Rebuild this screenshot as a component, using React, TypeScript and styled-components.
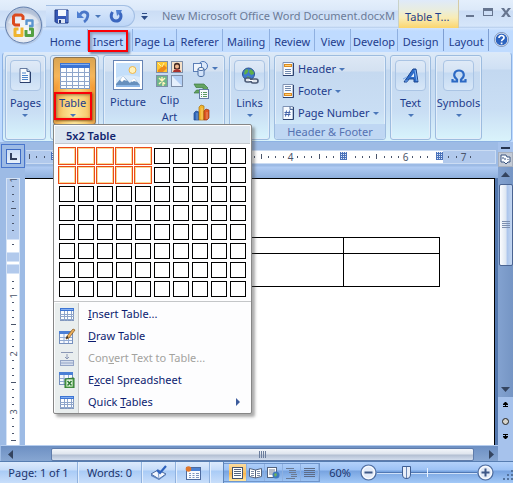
import React from "react";
import styled, { createGlobalStyle, css } from "styled-components";

const Global = createGlobalStyle`
  * { box-sizing: border-box; }
  html, body { margin: 0; }
  body { font-family: "Noto Sans", "Open Sans", sans-serif; font-size: 11px; line-height: 14px; color: #1e3c8c; }
  button { font: inherit; color: inherit; background: none; border: 0; padding: 0; margin: 0; text-align: center; }
  svg { display: block; flex: none; }
`;

/* ---------- window frame ---------- */

const Window = styled.div`
  display: flex;
  flex-direction: column;
  height: 100vh;
  min-height: 440px;
  overflow: hidden;
  background: #bfdbff;
`;

const TopArea = styled.header`
  position: relative;
  flex: none;
`;

const TitleBar = styled.div`
  display: flex;
  align-items: center;
  height: 28px;
  padding-left: 46px;
  background: linear-gradient(#e4effc 0, #dce9f9 10px, #cbddf5 11px, #d6e6fa 26px, #b5cdec 28px);
`;

const QuickAccess = styled.div`
  display: flex;
  align-items: center;
  flex: none;
  width: 89px;
  height: 22px;
  margin-top: 4px;
  padding-left: 8px;
  border: 1px solid #a3bfe4;
  border-left: 0;
  border-radius: 0 11px 11px 0;
  background: linear-gradient(#dbe9fb, #bcd5f7);
`;

const QuickButton = styled.button<{ $gap: number }>`
  display: flex;
  margin-right: ${(p) => p.$gap}px;
`;

const Customize = styled.button`
  flex: none;
  width: 27px;
  display: flex;
  justify-content: center;
  padding: 4px 8px 0 0;
`;

const Title = styled.h1`
  flex: 1 1 0;
  min-width: 0;
  margin: 3px 0 0;
  white-space: nowrap;
  font-size: 11px;
  line-height: 16px;
  font-weight: 400;
  color: #6b7b98;
`;

const ContextTab = styled.div`
  flex: none;
  width: 61px;
  height: 28px;
  padding: 9px 0 0 6px;
  line-height: 16px;
  white-space: nowrap;
  border-left: 1px solid #c9d2c8;
  border-right: 1px solid #d5cba4;
  background: linear-gradient(#dfeafa 0, #e9eddf 10px, #f9ecb4 18px, #fbd56d 28px);
`;

const WindowButtons = styled.div`
  display: flex;
  flex: none;
  align-items: center;
  justify-content: space-between;
  width: 54px;
  padding: 0 2px 4px 7px;
`;

const OfficeButton = styled.button`
  position: absolute;
  left: 4px;
  top: 6px;
`;

const TabRow = styled.nav`
  display: flex;
  height: 24px;
  padding: 1px 1px 0 44px;
  background: linear-gradient(#d3e5fd 0, #bfdbff 3px);
`;

const Tab = styled.button<{ $grow: number; $last?: boolean; $marked?: boolean }>`
  position: relative;
  flex: ${(p) => p.$grow} 1 0;
  min-width: 0;
  height: 22px;
  padding: 4px ${(p) => (p.$marked ? 4 : 0)}px 0 0;
  line-height: 18px;
  white-space: nowrap;
  border-right: 1px solid ${(p) => (p.$last ? "#7f9fd2" : "#8fb0e0")};
`;

const TabMark = styled.span`
  position: absolute;
  inset: 1px 4px -1px 0;
  border: 2px solid #fb0007;
  box-shadow: 2px 2px 2px #7688a8, inset 2px 2px 3px #8f9dbb;
`;

const HelpButton = styled.button`
  flex: none;
  width: 23px;
  display: flex;
  justify-content: center;
  padding: 3px 0 0 2px;
`;

/* ---------- ribbon ---------- */

const Ribbon = styled.section`
  display: flex;
  gap: 4px;
  flex: none;
  height: 90px;
  margin: 0 1px 0 2px;
  padding: 2px 0 2px 2px;
  border: 1px solid #8db2e3;
  border-top-color: #dbe9fb;
  border-radius: 4px;
  background: linear-gradient(#dce9f7 0, #cfe0f4 16px, #c3d8f0 17px, #c9def4 56px, #daf3fb 88px);
`;

const Group = styled.div<{ $width: number }>`
  position: relative;
  display: flex;
  flex-direction: column;
  align-items: center;
  flex: 0 1 ${(p) => p.$width}px;
  height: 85px;
  border: 1px solid #9dbcdf;
  border-radius: 3px;
  box-shadow: inset 0 0 0 1px #e3eefa;
  background: linear-gradient(#dde8f5 0, #d4e1f1 15px, #c5d9f0 16px, #c9def4 56px, #d8f4fc 84px);
`;

const BigButton = styled.button<{ $spaced?: boolean }>`
  display: flex;
  flex-direction: column;
  align-items: center;
  padding-top: ${(p) => (p.$spaced ? 4 : 5)}px;
  line-height: 13px;
  white-space: nowrap;
`;

const IconFrame = styled.span`
  display: flex;
  align-items: center;
  justify-content: center;
  width: 31px;
  height: 31px;
  margin-bottom: 5px;
  border: 1px solid #aac4e4;
  border-radius: 4px;
  background: linear-gradient(#dfeaf7 0, #d5e3f4 11px, #c3d9f2 12px, #d9e8f8 30px);
`;

const Caret = styled.span`
  width: 0;
  height: 0;
  border: 3px solid transparent;
  border-top-color: #4a77b9;
  border-bottom: 0;
`;

const CaretBelow = styled(Caret)`
  margin-top: 5px;
`;

const TableButton = styled.button`
  display: flex;
  flex-direction: column;
  align-items: center;
  width: 43px;
  height: 68px;
  margin-top: 1px;
  padding-top: 5px;
  line-height: 13px;
  border: 1px solid #8c7350;
  border-radius: 3px;
  background: radial-gradient(ellipse at 50% 90%, #ffeaa0 0, #f8cf75 40%, rgba(248, 190, 90, 0) 70%),
    linear-gradient(#d9a452 0, #f6b65a 18px, #f59c36 30px, #e8a24a 100%);
`;

const TableLabel = styled.span`
  display: flex;
  flex-direction: column;
  align-items: center;
  width: 38px;
  height: 28px;
  margin: 3px 4px 0 0;
  padding-top: 2px;
  border: 2px solid #fb0007;
  box-shadow: 1px 1px 2px #8a5a20, inset 1px 1px 3px #9c7640;
`;

const Illustrations = styled.div`
  display: flex;
  justify-content: space-between;
  align-self: stretch;
  padding: 0 6px;
`;

const SmallStack = styled.div`
  display: flex;
  flex-direction: column;
  gap: 5px;
  padding-top: 4px;
`;

const SmallButton = styled.button`
  display: flex;
  align-items: center;
  gap: 3px;
  height: 17px;
`;

const HeaderList = styled.div`
  flex: 1;
  align-self: stretch;
  padding: 2px 0 0 7px;
`;

const HeaderItem = styled.button`
  display: flex;
  align-items: center;
  height: 22px;
  white-space: nowrap;
`;

const HeaderItemText = styled.span`
  margin: 0 3px 0 4px;
`;

const GroupCaption = styled.div`
  align-self: stretch;
  height: 16px;
  line-height: 15px;
  text-align: center;
  color: #5572b2;
  background: #bfd7f3;
  border-radius: 0 0 3px 3px;
`;

/* ---------- table menu ---------- */

const Menu = styled.div`
  position: absolute;
  z-index: 5;
  left: 2px;
  top: 68px;
  width: 199px;
  border: 1px solid #868686;
  border-radius: 0 2px 2px 2px;
  background: #fdfdfe;
  box-shadow: 3px 3px 3px rgba(70, 70, 70, 0.45);
  color: #0c1c70;
`;

const MenuHeading = styled.h2`
  margin: 1px 1px 0;
  height: 18px;
  padding-left: 11px;
  font-size: 11px;
  line-height: 19px;
  font-weight: 600;
  color: #10246e;
  background: #dde6ef;
  border-bottom: 1px solid #c4c9ce;
`;

const Picker = styled.div`
  display: grid;
  grid-template-columns: repeat(10, 16px);
  grid-auto-rows: 16px;
  gap: 3px;
  padding: 4px 5px;
  border-bottom: 1px solid #c4c6c8;
`;

const Cell = styled.button<{ $on: boolean }>`
  border: 1px solid #000;
  background: #fff;
  ${(p) =>
    p.$on &&
    css`
      border-color: #f8dc98;
      box-shadow: 0 0 0 1px #ec4a18;
    `}
`;

const MenuList = styled.ul`
  list-style: none;
  margin: 1px 0 0;
  padding: 0 1px;
  background: linear-gradient(90deg, transparent 0 1px, #e9eeee 1px 24px, #c5c7c8 24px 25px, transparent 25px);
`;

const MenuItem = styled.button<{ $muted?: boolean }>`
  display: grid;
  grid-template-columns: 24px 1fr 24px;
  align-items: center;
  column-gap: 9px;
  width: 100%;
  height: 22px;
  text-align: left;
  white-space: nowrap;
  color: ${(p) => (p.$muted ? "#a3a39f" : "inherit")};
  svg { justify-self: center; }
`;

/* ---------- document area ---------- */

const Workspace = styled.main`
  display: grid;
  grid-template-columns: 25px 1fr 15px;
  grid-template-rows: 36px 1fr 16px;
  flex: 1;
  min-height: 0;
  background: #9dbbe5;
`;

const Corner = styled.div`
  display: flex;
  align-items: center;
  justify-content: center;
  height: 24px;
  margin: 2px 0 0 1px;
  border: 1px solid #4976cc;
`;

const TabSelector = styled.button`
  display: flex;
  align-items: center;
  justify-content: center;
  width: 15px;
  height: 15px;
  border: 1px solid #3f6cc4;
  background: linear-gradient(#c8dcf4, #e8f0fa);
`;

const RulerArea = styled.div`
  overflow: hidden;
  background: linear-gradient(#9dbbe5 24px, #b0cbf3 25px, #8fb0dc 36px);
`;

const VRulerArea = styled.div`
  overflow: hidden;
  padding-left: 6px;
`;

const PageArea = styled.div`
  min-width: 0;
  padding-right: 3px;
  background: #5377ad;
`;

const Page = styled.div`
  height: 100%;
  padding: 58px 54px 0 29px;
  border: 1px solid #000;
  border-width: 1px 1px 0 0;
  background: #fff;
`;

const DocTable = styled.table`
  width: 100%;
  border-collapse: collapse;
  table-layout: fixed;
  td { border: 1px solid #000; padding: 0; height: 33px; }
  tr:first-child td { height: 16px; }
`;

const VScroll = styled.div`
  grid-column: 3;
  grid-row: 1 / 4;
  display: flex;
  flex-direction: column;
  align-items: center;
  background: #a6c2ec;
`;

const SplitHandle = styled.div`
  flex: none;
  width: 9px;
  height: 2px;
  margin: 5px 0 3px;
  background: #26354f;
`;

const RulerToggle = styled.button`
  flex: none;
  display: flex;
  align-items: center;
  justify-content: center;
  width: 15px;
  height: 15px;
  background: #c3cad5;
  border: 1px solid #a8b0be;
`;

const VTrack = styled.div`
  display: flex;
  flex-direction: column;
  align-items: center;
  flex: 1;
  width: 15px;
  padding: 5px 0 5px;
  background: linear-gradient(90deg, #83a2d0, #7595c4);
`;

const VThumb = styled.div`
  display: flex;
  align-items: center;
  justify-content: center;
  flex: 0 1 82px;
  width: 14px;
  margin: 7px 0 auto;
  border: 1px solid #4a6492;
  border-radius: 2px;
  background: linear-gradient(90deg, #fafcfe, #dde6f2 50%, #abc5ec 60%, #c5d8f2);
`;

const BrowseButtons = styled.div`
  display: flex;
  flex-direction: column;
  align-items: center;
  justify-content: space-between;
  flex: none;
  height: 64px;
  padding: 5px 0 21px;
`;

const HScroll = styled.div`
  grid-column: 1 / 3;
  display: flex;
  align-items: center;
  padding: 1px 4px 0 7px;
  border-left: 1px solid #9dbbe5;
  border-top: 1px solid #b6cdee;
  background: linear-gradient(#6d90c3, #87a6d2);
`;

const HThumb = styled.div`
  display: flex;
  align-items: center;
  justify-content: center;
  flex: 1;
  height: 13px;
  margin: 0 15px 0 38px;
  border: 1px solid #5f7cab;
  border-radius: 2px;
  background: linear-gradient(#f3f6fa, #dfe5ee 45%, #b3bfd2 55%, #d3deee);
`;

/* ---------- status bar ---------- */

const StatusBar = styled.footer`
  display: flex;
  flex: none;
  height: 22px;
  border-top: 1px solid #567db1;
  background: linear-gradient(#dceafd 0, #c6dcf9 8px, #a9cbf6 9px, #c8defa 21px);
  color: #1c356e;
`;

const StatusCell = styled.div<{ $width: number }>`
  display: flex;
  align-items: center;
  justify-content: center;
  flex: none;
  width: ${(p) => p.$width}px;
  white-space: nowrap;
  border-right: 1px solid #8fb1de;
  box-shadow: 1px 0 0 #e2eefd;
`;

const ViewArea = styled.div`
  display: flex;
  align-items: center;
  flex: 1;
  min-width: 0;
  margin-left: 13px;
  border-left: 1px solid #5f86bb;
  background: linear-gradient(#b3d1fa 0, #9cc2f5 8px, #77a3e0 9px, #a3c9f7 21px);
`;

const ViewButtons = styled.div`
  display: flex;
  flex: none;
  height: 19px;
  padding-left: 5px;
  border: 1px solid #6f95cb;
  border-left: 0;
`;

const ViewButton = styled.button<{ $active?: boolean }>`
  display: flex;
  align-items: center;
  justify-content: center;
  width: 18px;
  border-right: 1px solid #8eb0e0;
  background: ${(p) => (p.$active ? "linear-gradient(#fbdca0, #f9c161 50%, #fdb145 51%, #ffe7a0)" : "none")};
`;

const ZoomLabel = styled.label`
  width: 40px;
  flex: none;
  text-align: center;
`;

const ZoomButton = styled.button`
  display: flex;
  flex: none;
`;

const ZoomSlider = styled.input`
  flex: 1;
  min-width: 0;
  height: 16px;
  margin: 0;
  appearance: none;
  background: linear-gradient(#eaf3ff, #eaf3ff) 50% 50% / 1px 9px no-repeat,
    linear-gradient(transparent 7px, #5078b4 7px 8px, #cfe1f9 8px 9px, transparent 9px);
  &::-webkit-slider-thumb {
    appearance: none;
    width: 9px;
    height: 13px;
    border: 1px solid #3f5e92;
    border-radius: 1px 1px 5px 5px;
    background: linear-gradient(90deg, transparent 3px, #6b87b5 3px 4px, transparent 4px), #e8eef8;
  }
`;

const Grip = styled.div`
  display: flex;
  align-items: flex-end;
  justify-content: flex-end;
  flex: none;
  width: 19px;
  height: 100%;
  padding: 0 0 3px;
`;

/* ---------- icons ---------- */

const OfficeLogo = () => (
  <svg width="40" height="40" viewBox="0 0 40 40">
    <defs>
      <radialGradient id="orb" cx="50%" cy="70%" r="60%">
        <stop offset="0" stopColor="#fff" />
        <stop offset=".6" stopColor="#dfe4ee" />
        <stop offset="1" stopColor="#b3c1d8" />
      </radialGradient>
    </defs>
    <circle cx="20" cy="20" r="19" fill="#b6cbe9" />
    <circle cx="19.500" cy="19" r="18" fill="url(#orb)" stroke="#6481af" />
    <path d="M4 17C7 4 32 4 35 17C27 20 12 20 4 17Z" fill="#fff" opacity=".4" />
    <g fill="none" strokeWidth="3" strokeLinejoin="round">
      <path d="M16 19H11l-1.500-1.500v-7L11 9h6.500L19 10.500V14" stroke="#dc4a1e" />
      <path d="M22.500 19v-4.500h6V20h-3.500" stroke="#5a94cf" strokeWidth="2.400" />
      <path d="M18 21.500v8h-7v-6.500h3.500" stroke="#efb42e" />
      <path d="M22 24v5.500h6.500V23H25" stroke="#54a043" />
    </g>
  </svg>
);

const SaveIcon = () => (
  <svg width="15" height="15" viewBox="0 0 15 15">
    <path d="M1 1h13v13H2.500L1 12.500z" fill="#3557b5" stroke="#223b82" />
    <path d="M4 1h8v6H4z" fill="#f5f8fd" />
    <path d="M12 2h1v11" fill="none" stroke="#6b8ddb" />
    <path d="M4 10h7v4H4z" fill="#dde5f2" />
    <path d="M5 11h2v3H5z" fill="#22397a" />
  </svg>
);

const UndoIcon = () => (
  <svg width="14" height="14" viewBox="0 0 14 14">
    <path d="M4 5.500C7 1 13 3 11.500 8Q11 11 8 13" fill="none" stroke="#4a76c8" strokeWidth="2.800" />
    <path d="M1 2v7h7z" fill="#4f7fd1" />
  </svg>
);

const RedoIcon = () => (
  <svg width="14" height="14" viewBox="0 0 14 14">
    <path d="M3.500 3C1 7 2.500 12 7 12s6.500-5 3.500-8.500" fill="none" stroke="#3a66bf" strokeWidth="3" />
    <path d="M7 1h6l-1 2-4 4z" fill="#4f7fd1" />
  </svg>
);

const HelpIcon = () => (
  <svg width="15" height="15" viewBox="0 0 15 15">
    <circle cx="7.500" cy="7.500" r="6.500" fill="#2c63bf" stroke="#f2f6fc" strokeWidth="1.200" />
    <circle cx="7.500" cy="7.500" r="7" fill="none" stroke="#536b97" strokeWidth=".7" />
    <path d="M5 6c0-3.500 5.200-3 5-.3C9.900 7.500 7.600 7.400 7.600 9.300M7.600 10.500v1.700" fill="none" stroke="#fff" strokeWidth="1.700" />
  </svg>
);

const PagesIcon = () => (
  <svg width="12" height="15" viewBox="0 0 12 15">
    <path d="M1 .5h7l3 3v11H1z" fill="#f6fafe" stroke="#667ba1" />
    <path d="M11.500 4v10.500H1" fill="none" stroke="#2a3f6c" />
    <path d="M8 .5v3h3" fill="#b9cce8" stroke="#4a648f" />
    <path d="M3 5h4M3 7.500h6M3 9.500h6M3 11.500h6" stroke="#4a82c8" />
  </svg>
);

const TableIcon = ({ w = 30, h = 26, cols = 5, rows = 5 }: { w?: number; h?: number; cols?: number; rows?: number }) => {
  const top = Math.round(h / 5);
  return (
    <svg width={w} height={h} viewBox={`0 0 ${w} ${h}`}>
      <rect x=".5" y=".5" width={w - 1} height={h - 1} fill="#fdfeff" stroke="#8197bd" />
      {Array.from({ length: cols - 1 }, (_, i) => (
        <path key={i} d={`M${Math.round(((i + 1) * w) / cols) + 0.5} ${top}V${h}`} stroke="#8fa6cb" />
      ))}
      {Array.from({ length: rows - 1 }, (_, i) => (
        <path key={i} d={`M0 ${Math.round(top + ((i + 1) * (h - top)) / rows) + 0.5}H${w}`} stroke="#8fa6cb" />
      ))}
      <rect width={w} height={top} fill="#3c74d3" />
      <path d={`M1 1.500H${w - 1}`} stroke="#82aef2" />
    </svg>
  );
};

const PictureIcon = () => (
  <svg width="30" height="30" viewBox="0 0 30 30">
    <rect x=".5" y=".5" width="29" height="29" fill="#fff" stroke="#6684b5" />
    <rect x="3" y="3" width="24" height="24" fill="#c4dffa" />
    <path d="M3 18c6-4 16-3 24-1v10H3z" fill="#dcecfb" />
    <circle cx="19.500" cy="10" r="3.500" fill="#fff2bd" stroke="#f0b649" />
    <path d="M3 24l7-8 4 4 3 3 4-5 6 7v2H3z" fill="#6790bd" />
    <path d="M10 16l4 5-3-1-2 2-2-2zM21 18l3 4-3-1-2 1-1-1z" fill="#fff" />
    <path d="M3 25h24v2H3z" fill="#8cb6e6" />
  </svg>
);

const ClipArtIcon = () => (
  <svg width="27" height="27" viewBox="0 0 27 27">
    <g stroke="#7e8ea8">
      <rect x=".5" y=".5" width="11" height="11" fill="#ffc832" />
      <rect x="15.500" y=".5" width="11" height="11" fill="#f4e0c8" />
      <rect x=".5" y="14.500" width="11" height="11" fill="#6fb58b" />
      <rect x="15.500" y="14.500" width="11" height="11" fill="#b3cff5" />
    </g>
    <path d="M2 9l6-5 3 3-4 4H2z" fill="#ee8a1c" />
    <path d="M2 2l3 3M8 2l-2 4" stroke="#fff0a0" />
    <path d="M18 4c0-3 6-3 6 0v4h-6z" fill="#442a24" />
    <circle cx="21" cy="5.500" r="2" fill="#f1b78e" />
    <path d="M17 11c0-4 8-4 8 0z" fill="#a9312c" />
    <path d="M3 17l6 6M9 17l-6 6M6 16v3M7 22v3" stroke="#fff4b8" strokeWidth="1.400" />
    <path d="M16 15l10 10H16z" fill="#e6f0fd" />
  </svg>
);

const ShapesIcon = () => (
  <svg width="16" height="16" viewBox="0 0 16 16">
    <circle cx="10" cy="5" r="4.500" fill="#dbe8fa" stroke="#4b74b6" />
    <rect x=".5" y="2.500" width="8" height="8" fill="#eef4fc" stroke="#5c7fb7" />
    <path d="M5 8v6c0 2 6 2 6 0V8" fill="#d4e4fa" stroke="#44699f" />
    <ellipse cx="8" cy="8" rx="3" ry="1.500" fill="#fff" stroke="#44699f" />
  </svg>
);

const SmartArtIcon = () => (
  <svg width="17" height="16" viewBox="0 0 17 16">
    <path d="M1 1h10l4 4-2 2H7v3H1l2.500-3H10V4.500H3z" fill="#63a360" stroke="#3c7a41" strokeWidth=".7" />
    <rect x="6.500" y="6.500" width="9" height="9" fill="#f6f9fd" stroke="#627ba4" />
    <path d="M8 9.500h1M10 9.500h4M8 11.500h1M10 11.500h4M8 13.500h1M10 13.500h4" stroke="#5a9a62" />
  </svg>
);

const ChartIcon = () => (
  <svg width="17" height="17" viewBox="0 0 17 17">
    <path d="M1 9l2-2 3 1v8H1z" fill="#2f68ba" stroke="#1e4689" strokeWidth=".7" />
    <path d="M6 3l2-2 3 1v14H6z" fill="#f2b52c" stroke="#a8710e" strokeWidth=".7" />
    <path d="M11 7l2-2 3 1v8l-2 2h-3z" fill="#df5722" stroke="#9a3511" strokeWidth=".7" />
    <path d="M4 9v7M9 4v12M14 8v7" stroke="#fff" strokeOpacity=".35" />
  </svg>
);

const LinksIcon = () => (
  <svg width="18" height="18" viewBox="0 0 18 18">
    <circle cx="7.500" cy="7" r="6" fill="#3f78ce" stroke="#27508f" />
    <path d="M4 3c3-2 4 0 3 2S4 8 3 7zM9 2c3 1 4 3 4 5l-3 1-2-3zM6 9l3 1-2 3z" fill="#5fae49" />
    <g fill="none" stroke="#4c5b76" strokeWidth="1.600">
      <rect x="4" y="11" width="6" height="4" rx="2" fill="#dfe5ee" />
      <rect x="10" y="12" width="7" height="4" rx="2" fill="#dfe5ee" />
    </g>
    <path d="M8 13.500h4" stroke="#fff" />
  </svg>
);

const HeaderDocIcon = ({ kind }: { kind: "top" | "bottom" | "number" }) => (
  <svg width="12" height="14" viewBox="0 0 12 14">
    <path d="M1 .5h10v13H1z" fill="#f8fbff" stroke="#7f92b3" />
    <path d="M11.500 1v12.500H1" fill="none" stroke="#2c4270" />
    {kind === "number" ? (
      <>
        <path d="M4.500 4.500l-1 6M7.500 4.500l-1 6M2.500 6.500h6M2.500 8.500h6" stroke="#4664a8" />
        <path d="M8 .5v3h3" fill="#c6d5ea" stroke="#536c99" />
      </>
    ) : (
      <>
        <path d={kind === "top" ? "M3 7.500h6M3 9.500h6M3 11.500h6" : "M3 2.500h6M3 4.500h6M3 6.500h6"} stroke="#7189ae" />
        <rect x="2.500" y={kind === "top" ? 2.5 : 9.5} width="7" height="2" fill="#ffd27a" stroke="#dc8b1e" />
      </>
    )}
  </svg>
);

const TextIcon = () => (
  <svg width="18" height="16" viewBox="0 0 18 16">
    <path d="M2 14L11 1h3l2 13h-4v-3H7l-2 3z" fill="#2d6cc9" stroke="#1d468f" />
    <path d="M9 9h3V5z" fill="#e4eefa" />
    <path d="M1 11l4-2M3 13h3" stroke="#75a5e8" />
    <path d="M13 2l2 11" stroke="#7fb1f3" />
  </svg>
);

const OmegaIcon = () => (
  <svg width="16" height="14" viewBox="0 0 16 14">
    <path
      d="M1.500 10v2.500h4.500v-2C1 6.500 3.500 1.500 8 1.500s7 5 2 9v2h4.500V10"
      fill="none"
      stroke="#2c69c4"
      strokeWidth="2.200"
    />
  </svg>
);

const DrawTableIcon = () => (
  <svg width="17" height="17" viewBox="0 0 17 17">
    <rect x=".5" y="3.500" width="13" height="12" fill="#f6f9fe" stroke="#7690bd" />
    <path d="M0 3h14v3H0z" fill="#4a7fd6" />
    <path d="M5 6v9M9.500 6v9M1 9.500h12M1 12.500h12" stroke="#92abd3" />
    <path d="M7 11l1-3 6-7 2 1-6 8z" fill="#eeb25a" stroke="#8c5c25" strokeWidth=".8" />
    <path d="M7 11l1-3 1.500 1.300z" fill="#222" />
  </svg>
);

const ConvertIcon = () => (
  <svg width="14" height="15" viewBox="0 0 14 15">
    <path d="M1 1.500h12M7 3v5M5 6l2 2 2-2" fill="none" stroke="#8b98b4" />
    <rect x=".5" y="9.500" width="13" height="5" fill="#d5deed" stroke="#93a4c6" />
    <path d="M1 12h12" stroke="#93a4c6" />
  </svg>
);

const ExcelIcon = () => (
  <svg width="16" height="16" viewBox="0 0 16 16">
    <rect x=".5" y=".5" width="13" height="12" fill="#f6f9fe" stroke="#7690bd" />
    <path d="M0 0h14v3H0z" fill="#4a7fd6" />
    <path d="M5 3v9M9.500 3v9M1 6.500h12M1 9.500h12" stroke="#92abd3" />
    <path d="M6 7l9-1v10H6z" fill="#58a84f" stroke="#2c7430" />
    <rect x="7.500" y="7.500" width="6" height="7" fill="#e9f5e6" />
    <path d="M8.500 9l4 4.500M12.500 9l-4 4.500" stroke="#2b7a31" strokeWidth="1.500" />
  </svg>
);

const Arrow = ({ d, w = 9, h = 9, fill = "#34445f" }: { d: string; w?: number; h?: number; fill?: string }) => (
  <svg width={w} height={h} viewBox={`0 0 ${w} ${h}`}>
    <path d={d} fill={fill} fillRule="evenodd" />
  </svg>
);

const ProofIcon = () => (
  <svg width="18" height="15" viewBox="0 0 18 15">
    <path d="M1 9l7-4 8 4-7 5z" fill="#f3f7fd" stroke="#48689f" />
    <path d="M1 9v2l8 4 7-5V9l-7 5z" fill="#5d82bd" />
    <path d="M8 5l1 9" stroke="#7e9bc9" />
    <path d="M7 5l3 3 6-7" fill="none" stroke="#2e62bd" strokeWidth="2.200" />
  </svg>
);

const MacroIcon = () => (
  <svg width="16" height="14" viewBox="0 0 16 14">
    <rect x="1.500" y="1.500" width="14" height="12" fill="#f8fbff" stroke="#4c6a9e" />
    <path d="M2 2h13v3H2z" fill="#4c82d3" />
    <path d="M4 7.500h2M7.500 7.500h2M11 7.500h3M4 9.500h2M7.500 9.500h2M11 9.500h3M4 11.500h2M7.500 11.500h2M11 11.500h3" stroke="#7d95bd" />
    <circle cx="3.500" cy="3" r="2.800" fill="#e0762b" />
  </svg>
);

const ViewIcon = ({ kind }: { kind: number }) => (
  <svg width="13" height="12" viewBox="0 0 13 12">
    {kind === 0 && (
      <>
        <rect x="1.500" y=".5" width="10" height="11" fill="#fff" stroke="#43536f" />
        <path d="M3 2.500h7M3 4.500h7M3 6.500h7M3 8.500h7" stroke="#55657f" />
      </>
    )}
    {kind === 1 && (
      <>
        <path d="M.5 1.500L6.500 3l6-1.500v8L6.500 11l-6-1.500zM6.500 3v8" fill="#fff" stroke="#53637f" />
        <path d="M2 4.500h3M2 6.500h3M8 4.500h3M8 6.500h3M2 8.500h3M8 8.500h3" stroke="#7b8aa5" />
      </>
    )}
    {kind === 2 && (
      <>
        <rect x=".5" y=".5" width="9" height="10" fill="#fff" stroke="#53637f" />
        <path d="M2 3h6M2 5h6M2 7h4" stroke="#6b7a95" />
        <circle cx="9" cy="8" r="3.500" fill="#3f78be" />
        <path d="M7 7l2-1 1 2-2 2z" fill="#6cb35a" />
      </>
    )}
    {kind === 3 && <path d="M1 1.500h8M4 3.500h7M4 5.500h7M6 7.500h6M6 9.500h6M1 11.500h9" stroke="#6b7a93" />}
    {kind === 4 && <path d="M1 1.500h11M1 3.500h11M1 5.500h11M1 7.500h11M1 9.500h11" stroke="#5d6c87" />}
  </svg>
);

const RoundIcon = ({ plus }: { plus?: boolean }) => (
  <svg width="17" height="17" viewBox="0 0 17 17">
    <circle cx="8.500" cy="8.500" r="7.500" fill="#e3ebf8" stroke="#4e6c9e" strokeWidth="1.200" />
    <circle cx="8.500" cy="8.500" r="6" fill="none" stroke="#fff" />
    <path d={plus ? "M4.500 8.500h8M8.500 4.500v8" : "M4.500 8.500h8"} stroke="#3d5786" strokeWidth="2" />
  </svg>
);

/* ---------- rulers ---------- */

const TICK = 7.2125;

const HorizontalRuler = () => {
  const zero = 34;
  const marks = Array.from({ length: 58 }, (_, i) => i).filter(
    (i) => i * TICK + zero < 464 && i !== 39 && i !== 52 && i !== 0
  );
  return (
    <svg width="100%" height="36">
      <rect x="1" y="9" width="469" height="12" fill="#b1c9ec" />
      <rect x="28" y="9" width="390" height="12" fill="#fff" />
      <path d="M1 8.500H470M1 21.500H470M470.500 8V22" stroke="#cbdcf3" fill="none" />
      <path d="M4.500 12v5M11.500 14v2M19.500 14v2" stroke="#4a556b" />
      {marks.map((i) => {
        const x = Math.round(zero + i * TICK) + 0.5;
        if (i % 8 === 0) {
          return i === 40 ? null : (
            <text key={i} x={x} y="19" textAnchor="middle" fontSize="10" fill="#4a556b">
              {i / 8}
            </text>
          );
        }
        return <path key={i} d={i % 8 === 4 ? `M${x} 12v5` : `M${x} 14v2`} stroke="#4a556b" />;
      })}
      {[26, 315, 411].map((x) => (
        <g key={x}>
          <rect x={x} y="10" width="7" height="8" fill="#dfe9f8" />
          <path
            d={`M${x + 0.5} 10v8M${x + 2.5} 10v8M${x + 4.5} 10v8M${x + 6.5} 10v8M${x} 11.500h7M${x} 13.500h7M${x} 15.500h7M${x} 17.500h7`}
            stroke="#4a72ba"
          />
        </g>
      ))}
    </svg>
  );
};

const VerticalRuler = () => (
  <svg width="14" height="100%">
    <rect x="0" y="0" width="14" height="100%" fill="#d5e3f6" />
    <rect x="1" y="1" width="12" height="60" fill="#b1c9ec" />
    <rect x="1" y="62" width="12" height="12" fill="#fff" />
    <rect x="1" y="75" width="12" height="8" fill="#b1c9ec" />
    <rect x="1" y="84" width="12" height="2" fill="#fff" />
    <rect x="1" y="87" width="12" height="8" fill="#b1c9ec" />
    <rect x="1" y="96" width="12" height="100%" fill="#fff" />
    <path d="M6 66.500h2" stroke="#4a556b" />
    {Array.from({ length: 37 }, (_, i) => {
      const y = Math.round(1 + i * 7.25);
      if (y > 56 && y < 100) return null;
      if (i % 8 === 0) {
        const n = i === 0 ? 1 : i / 8 - 1;
        return (
          <text key={i} x="0" y="0" transform={`translate(11 ${y + 1}) rotate(-90)`} textAnchor="middle" fontSize="9" fill="#4a556b">
            {n}
          </text>
        );
      }
      return <path key={i} d={i % 8 === 4 ? `M5 ${y + 0.5}h5` : `M6 ${y + 0.5}h2`} stroke="#4a556b" />;
    })}
  </svg>
);

/* ---------- data ---------- */

const tabs = [
  { text: "Home", grow: 44 },
  { text: "Insert", grow: 42, marked: true },
  { text: "Page La", grow: 44 },
  { text: "Referer", grow: 47 },
  { text: "Mailing", grow: 47 },
  { text: "Review", grow: 46 },
  { text: "View", grow: 36 },
  { text: "Develop", grow: 47 },
  { text: "Design", grow: 47 },
  { text: "Layout", grow: 45 },
];

const menuItems = [
  { before: "", key: "I", after: "nsert Table...", icon: <TableIcon w={14} h={13} cols={4} rows={4} /> },
  { before: "", key: "D", after: "raw Table", icon: <DrawTableIcon /> },
  { before: "Con", key: "v", after: "ert Text to Table...", icon: <ConvertIcon />, muted: true },
  { before: "E", key: "x", after: "cel Spreadsheet", icon: <ExcelIcon /> },
  { before: "Quick ", key: "T", after: "ables", icon: <TableIcon w={14} h={13} cols={4} rows={4} />, sub: true },
];

const COLUMNS = 10;

export default function App() {
  return (
    <Window>
      <Global />
      <TopArea>
        <TitleBar>
          <QuickAccess>
            <QuickButton $gap={7} aria-label="Save"><SaveIcon /></QuickButton>
            <QuickButton $gap={5} aria-label="Undo"><UndoIcon /></QuickButton>
            <QuickButton $gap={8} aria-label="Undo history"><Caret /></QuickButton>
            <QuickButton $gap={0} aria-label="Repeat"><RedoIcon /></QuickButton>
          </QuickAccess>
          <Customize aria-label="Customize toolbar">
            <Arrow w={7} h={7} d="M1 0h5v1H1zM0 3h7L3.500 7z" fill="#2c4b86" />
          </Customize>
          <Title>New Microsoft Office Word Document.docxM</Title>
          <ContextTab>Table T...</ContextTab>
          <WindowButtons>
            <button aria-label="Minimize"><Arrow w={8} h={10} d="M0 8h8v2H0z" fill="#66758f" /></button>
            <button aria-label="Restore"><Arrow w={10} h={8} d="M0 0h10v8H0zM1 3v4h8V3z" fill="#66758f" /></button>
            <button aria-label="Close"><Arrow w={10} h={9} d="M0 0h3l2 3 2-3h3L6.500 4.500 10 9H7L5 6 3 9H0l3.500-4.500z" fill="#66758f" /></button>
          </WindowButtons>
        </TitleBar>
        <TabRow>
          {tabs.map((t, i) => (
            <Tab key={t.text} $grow={t.grow} $last={i > 7} $marked={t.marked}>
              {t.text}
              {t.marked && <TabMark />}
            </Tab>
          ))}
          <HelpButton aria-label="Help"><HelpIcon /></HelpButton>
        </TabRow>
        <OfficeButton aria-label="Office menu"><OfficeLogo /></OfficeButton>
      </TopArea>

      <Ribbon>
        <Group $width={41}>
          <BigButton $spaced><IconFrame><PagesIcon /></IconFrame>Pages<CaretBelow /></BigButton>
        </Group>
        <Group $width={49}>
          <TableButton>
            <TableIcon />
            <TableLabel>Table<CaretBelow /></TableLabel>
          </TableButton>
          <Menu>
            <MenuHeading>5x2 Table</MenuHeading>
            <Picker>
              {Array.from({ length: 80 }, (_, i) => (
                <Cell
                  key={i}
                  $on={i % COLUMNS < 5 && i < 2 * COLUMNS}
                  aria-label={`${(i % COLUMNS) + 1}x${Math.floor(i / COLUMNS) + 1} Table`}
                />
              ))}
            </Picker>
            <MenuList>
              {menuItems.map((m) => (
                <li key={m.before + m.key + m.after}>
                  <MenuItem $muted={m.muted} disabled={m.muted}>
                    {m.icon}
                    <span>{m.before}<u>{m.key}</u>{m.after}</span>
                    {m.sub && <Arrow w={4} h={8} d="M0 0l4 4-4 4z" fill="#3c5b9c" />}
                  </MenuItem>
                </li>
              ))}
            </MenuList>
          </Menu>
        </Group>
        <Group $width={122}>
          <Illustrations>
            <BigButton $spaced>
              <PictureIcon />
              <HeaderItem as="span">Picture</HeaderItem>
            </BigButton>
            <BigButton>
              <ClipArtIcon />
              <HeaderItem as="span">Clip</HeaderItem>
              Art
            </BigButton>
            <SmallStack>
              <SmallButton aria-label="Shapes"><ShapesIcon /><Caret /></SmallButton>
              <SmallButton aria-label="SmartArt"><SmartArtIcon /></SmallButton>
              <SmallButton aria-label="Chart"><ChartIcon /></SmallButton>
            </SmallStack>
          </Illustrations>
        </Group>
        <Group $width={41}>
          <BigButton $spaced><IconFrame><LinksIcon /></IconFrame>Links<CaretBelow /></BigButton>
        </Group>
        <Group $width={112}>
          <HeaderList>
            <HeaderItem><HeaderDocIcon kind="top" /><HeaderItemText>Header</HeaderItemText><Caret /></HeaderItem>
            <HeaderItem><HeaderDocIcon kind="bottom" /><HeaderItemText>Footer</HeaderItemText><Caret /></HeaderItem>
            <HeaderItem><HeaderDocIcon kind="number" /><HeaderItemText>Page Number</HeaderItemText><Caret /></HeaderItem>
          </HeaderList>
          <GroupCaption>Header &amp; Footer</GroupCaption>
        </Group>
        <Group $width={41}>
          <BigButton $spaced><IconFrame><TextIcon /></IconFrame>Text<CaretBelow /></BigButton>
        </Group>
        <Group $width={47}>
          <BigButton $spaced><IconFrame><OmegaIcon /></IconFrame>Symbols<CaretBelow /></BigButton>
        </Group>
      </Ribbon>

      <Workspace>
        <Corner>
          <TabSelector aria-label="Tab stop"><Arrow w={7} h={7} d="M0 0h2v5h5v2H0z" fill="#32405c" /></TabSelector>
        </Corner>
        <RulerArea><HorizontalRuler /></RulerArea>
        <VScroll>
          <SplitHandle />
          <RulerToggle aria-label="View ruler">
            <svg width="11" height="11" viewBox="0 0 11 11">
              <path d="M1 1h5l1 2h3v5H8l-2 2-2-2H1z" fill="#f8fbff" stroke="#38537f" />
              <path d="M3 3v2M5 4v2M8 5v1" stroke="#38537f" />
            </svg>
          </RulerToggle>
          <VTrack>
            <Arrow h={5} d="M0 5l4.500-5L9 5z" />
            <VThumb><Arrow w={8} h={8} d="M0 0h8v1H0zM0 2h8v1H0zM0 4h8v1H0zM0 6h8v1H0z" fill="#7d90b0" /></VThumb>
            <Arrow h={5} d="M0 0h9L4.500 5z" />
          </VTrack>
          <BrowseButtons>
            <button aria-label="Previous page"><Arrow w={5} h={6} d="M2 0h1l2 2v1H3v1h2v1H0V4h2V3H0V2z" fill="#000" /></button>
            <button aria-label="Select browse object">
              <svg width="7" height="7" viewBox="0 0 7 7"><circle cx="3.500" cy="3.500" r="3" fill="#d6d4cc" stroke="#222" /></svg>
            </button>
            <button aria-label="Next page"><Arrow w={5} h={6} d="M0 0h5v1H3v1h2v1L3 5H2L0 3V2h2V1H0z" fill="#000" /></button>
          </BrowseButtons>
        </VScroll>
        <VRulerArea><VerticalRuler /></VRulerArea>
        <PageArea>
          <Page>
            <DocTable>
              <tbody>
                <tr><td /><td /><td /><td /></tr>
                <tr><td /><td /><td /><td /></tr>
              </tbody>
            </DocTable>
          </Page>
        </PageArea>
        <HScroll>
          <Arrow w={5} h={9} d="M5 0v9L0 4.500z" />
          <HThumb><Arrow w={8} h={7} d="M0 0h1v7H0zM2 0h1v7H2zM4 0h1v7H4zM6 0h1v7H6z" fill="#6b7d9c" /></HThumb>
          <Arrow w={5} h={9} d="M0 0v9l5-4.500z" />
        </HScroll>
      </Workspace>

      <StatusBar>
        <StatusCell $width={78}>Page: 1 of 1</StatusCell>
        <StatusCell $width={64}>Words: 0</StatusCell>
        <StatusCell $width={34}><ProofIcon /></StatusCell>
        <StatusCell $width={34}><MacroIcon /></StatusCell>
        <ViewArea>
          <ViewButtons>
            {["Print Layout", "Full Screen Reading", "Web Layout", "Outline", "Draft"].map((name, i) => (
              <ViewButton key={name} $active={i === 0} aria-label={name}><ViewIcon kind={i} /></ViewButton>
            ))}
          </ViewButtons>
          <ZoomLabel htmlFor="zoom">60%</ZoomLabel>
          <ZoomButton aria-label="Zoom out"><RoundIcon /></ZoomButton>
          <ZoomSlider id="zoom" type="range" min={0} max={100} defaultValue={28} />
          <ZoomButton aria-label="Zoom in"><RoundIcon plus /></ZoomButton>
          <Grip>
            <Arrow w={10} h={10} d="M8 0h2v2H8zM4 4h2v2H4zM8 4h2v2H8zM0 8h2v2H0zM4 8h2v2H4zM8 8h2v2H8z" fill="#54749f" />
          </Grip>
        </ViewArea>
      </StatusBar>
    </Window>
  );
}
